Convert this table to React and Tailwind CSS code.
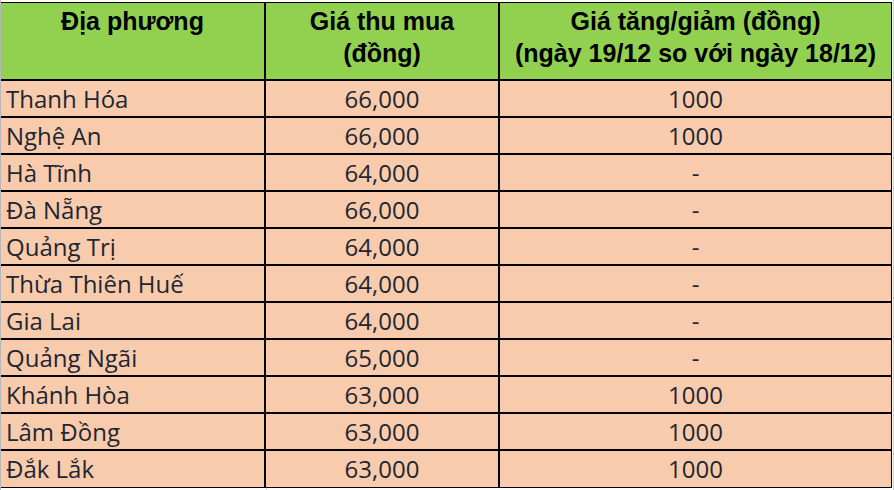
const ROWS = [
  ["Thanh Hóa", "66,000", "1000"],
  ["Nghệ An", "66,000", "1000"],
  ["Hà Tĩnh", "64,000", "-"],
  ["Đà Nẵng", "66,000", "-"],
  ["Quảng Trị", "64,000", "-"],
  ["Thừa Thiên Huế", "64,000", "-"],
  ["Gia Lai", "64,000", "-"],
  ["Quảng Ngãi", "65,000", "-"],
  ["Khánh Hòa", "63,000", "1000"],
  ["Lâm Đồng", "63,000", "1000"],
  ["Đắk Lắk", "63,000", "1000"],
];

export default function App() {
  return (
    <div className="w-[894px] h-[490px] bg-white overflow-hidden">
      <div className="flex h-full">
        <div className="w-px bg-[#b8b8b8]" />
        <div className="flex flex-col pt-[2px]">
          <div className="w-[891px] border-t border-r border-black">
            {/* Header */}
            <div className="flex h-[78px] border-b-2 border-black bg-[#92d050] text-black font-bold text-[25px] leading-[32px] text-center font-['Liberation_Sans',Arial,sans-serif]">
              <div className="w-[265px] border-r-2 border-black pt-[2px]">Địa phương</div>
              <div className="w-[234px] border-r-2 border-black pt-[2px]">
                Giá thu mua
                <br />
                (đồng)
              </div>
              <div className="flex-1 pt-[2px]">
                Giá tăng/giảm (đồng)
                <br />
                (ngày 19/12 so với ngày 18/12)
              </div>
            </div>
            {/* Body */}
            {ROWS.map(([place, price, delta], i) => (
              <div
                key={place}
                className={`flex h-[37px] bg-[#f8cbad] text-[#1e2631] text-[24px] font-['Open_Sans','Noto_Sans',sans-serif] ${i === ROWS.length - 1 ? "border-b border-black" : "border-b-2 border-black"}`}
              >
                <div className="w-[265px] border-r-2 border-black pl-[5px] flex items-center">{place}</div>
                <div className="w-[234px] border-r-2 border-black flex items-center justify-center">{price}</div>
                <div className="flex-1 flex items-center justify-center">{delta}</div>
              </div>
            ))}
          </div>
          <div className="flex flex-1">
            <div className="w-[266px] border-r border-[#d4d4d4]" />
          </div>
        </div>
        <div className="w-px" />
        <div className="w-px bg-[#d4d4d4]" />
      </div>
    </div>
  );
}
